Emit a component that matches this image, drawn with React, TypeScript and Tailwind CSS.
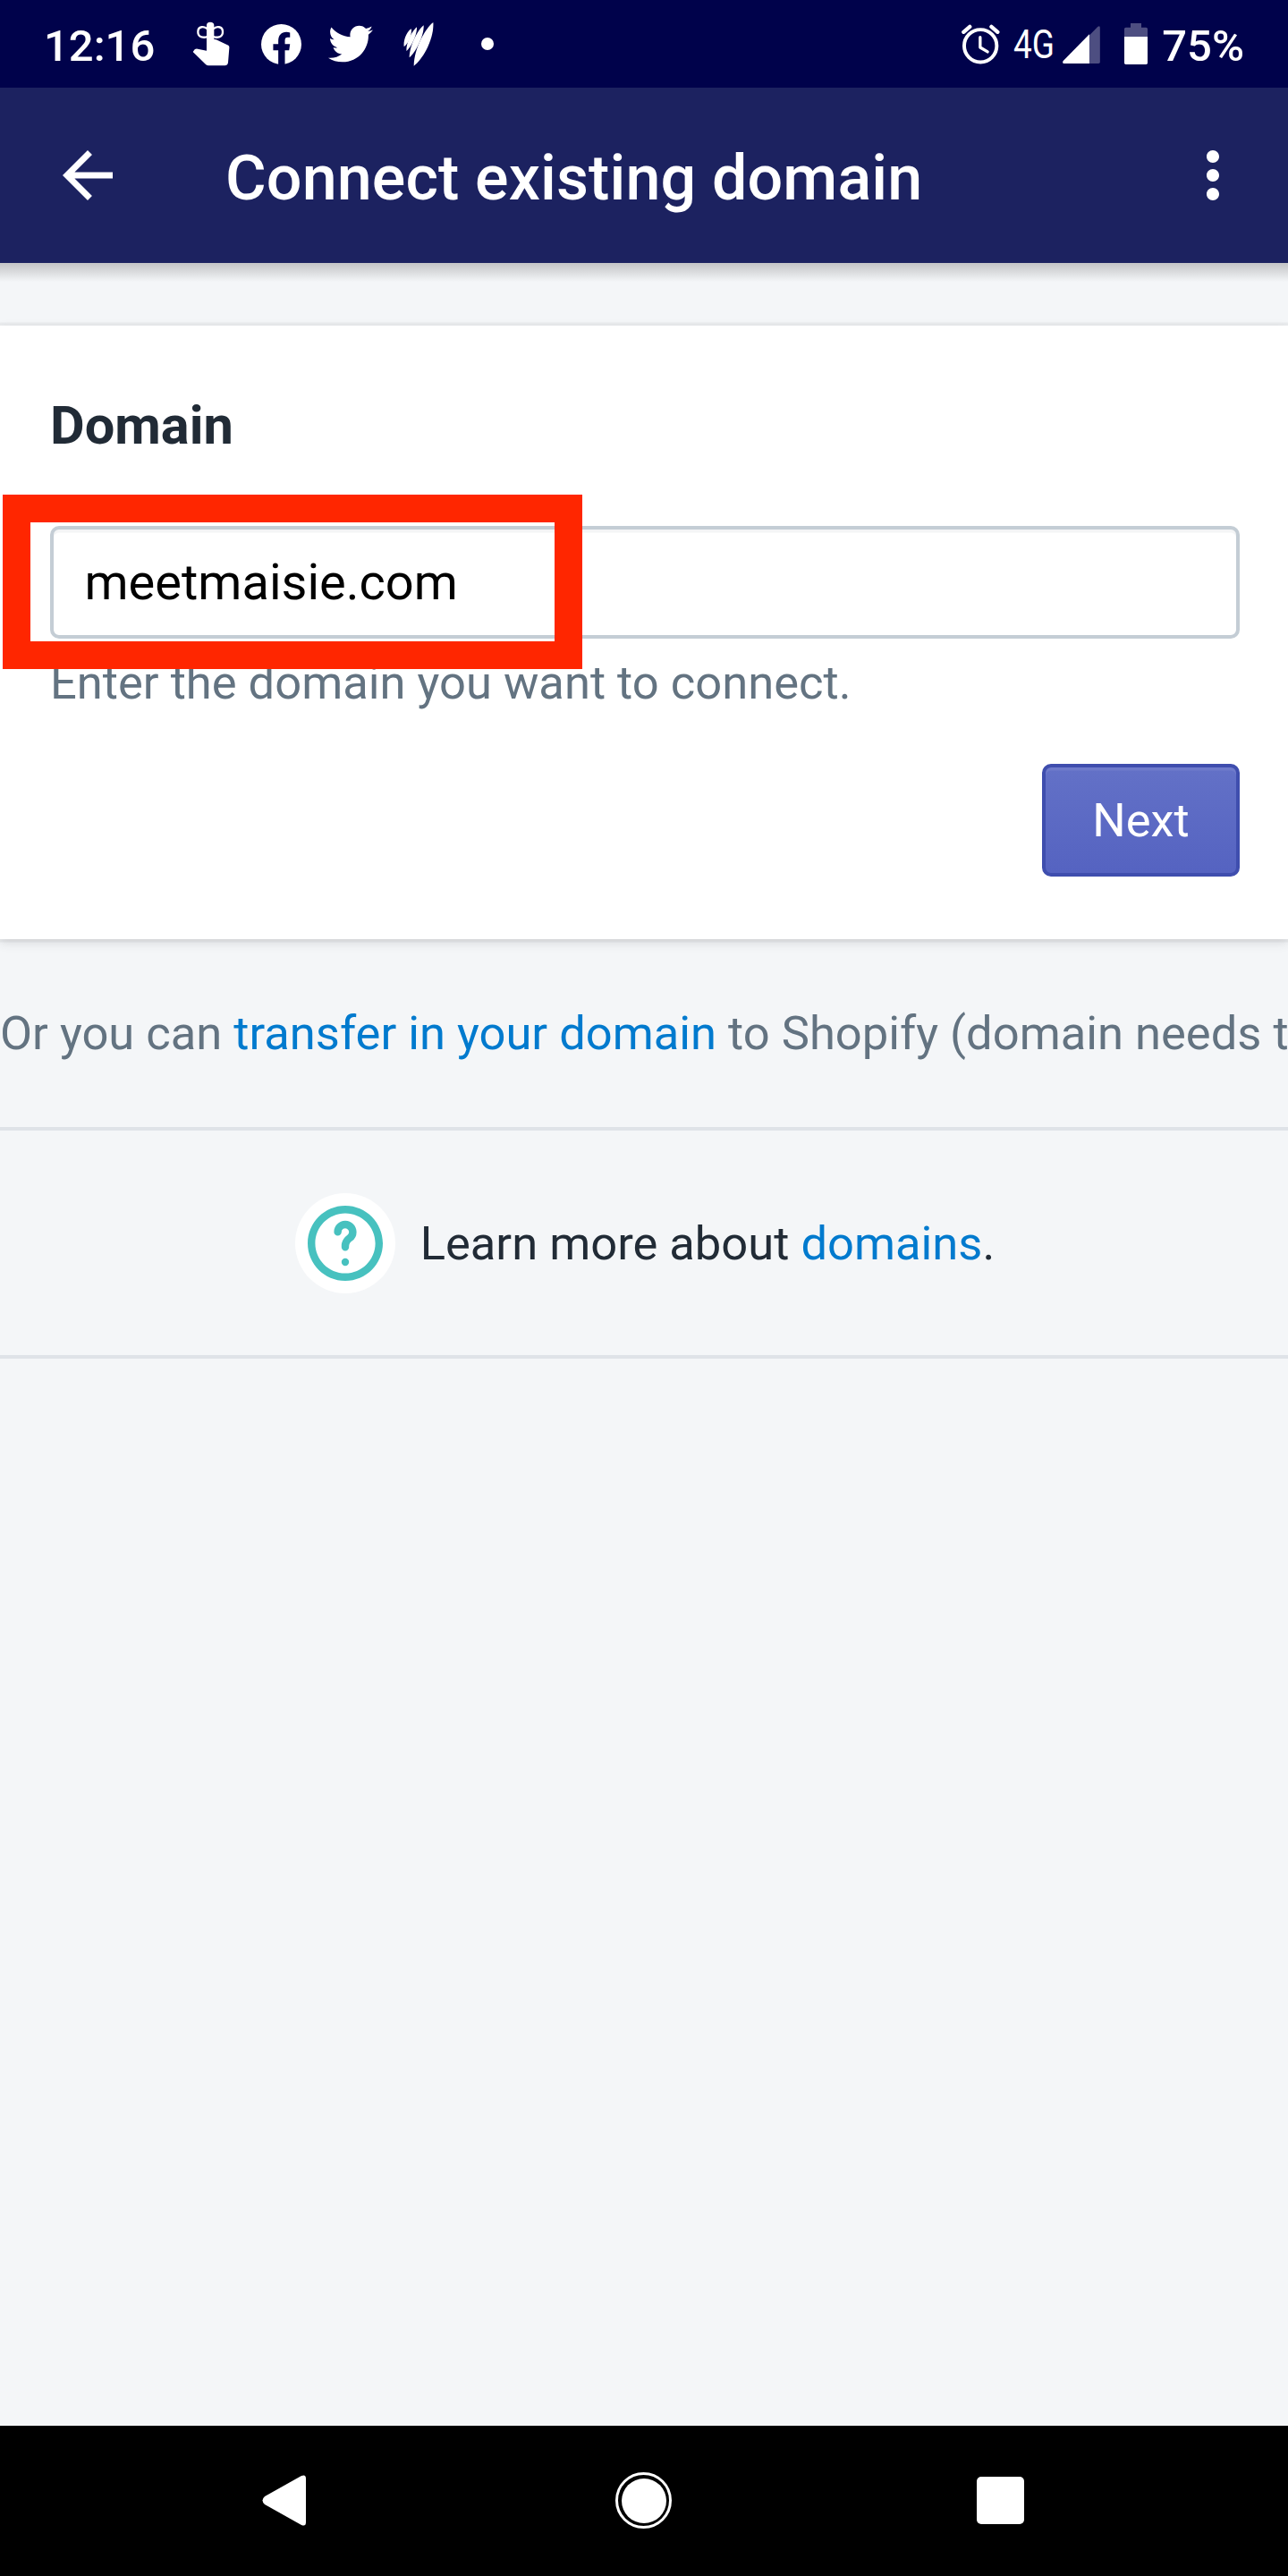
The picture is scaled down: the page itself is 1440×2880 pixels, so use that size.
import { ReactNode } from 'react';
import { FaTwitter } from 'react-icons/fa';
import { MdArrowBack, MdMoreVert } from 'react-icons/md';

function ReminderIcon() {
  return (
    <svg viewBox="645 73 126 150" className="h-[50px] w-[42px]" fill="#fff">
      <path d="M693 86Q693 75 705 75Q718 75 718 86V133L725 134L766 153Q770 156 769 162L765 211Q763 221 754 221H699Q694 221 690 217L647 175L653 167Q657 164 663 165L693 171Z" />
      <g fill="none" stroke="#fff" strokeWidth="7">
        <path d="M695 98C686 88 664 88 664 108C664 128 686 128 695 124" />
        <path d="M716 98C725 88 747 88 747 108C747 128 725 128 716 124" />
      </g>
    </svg>
  );
}

function FacebookIcon() {
  return (
    <svg viewBox="876 81 134 134" className="h-[45px] w-[45px]">
      <circle cx="943" cy="148" r="67" fill="#fff" />
      <path
        fill="#00024b"
        d="M933 217V168H916V147H933V137C933 118 943 107 960 107Q966 107 972 109V125H964Q955 125 955 135V147H972L969 168H955V217Z"
      />
    </svg>
  );
}

function StripesIcon() {
  return (
    <svg viewBox="273 72 102 147" className="h-[49px] w-[34px]" fill="#fff">
      <path d="M300 94C286 101 272 130 275 153C287 146 301 118 300 94Z" />
      <path d="M318 88C304 98 282 138 283 168C297 158 319 116 318 88Z" />
      <path d="M341 82C323 94 293 150 293 190C312 176 343 118 341 82Z" />
      <path d="M373 72C348 90 308 160 308 218C335 200 377 130 373 72Z" />
    </svg>
  );
}

function AlarmIcon() {
  return (
    <svg
      viewBox="104 80 130 135"
      className="h-[45px] w-[43px]"
      fill="none"
      stroke="#fff"
      strokeLinecap="round"
      strokeLinejoin="round"
    >
      <circle cx="168" cy="153" r="55" strokeWidth="12" />
      <path d="M167 124V158L192 173" strokeWidth="10" />
      <path d="M111 106L132 88M205 88L226 106" strokeWidth="13" />
    </svg>
  );
}

function SignalIcon() {
  return (
    <svg viewBox="444 86 126 127" className="h-[42px] w-[42px]">
      <path fill="#4d4e81" d="M534 118L562 89Q570 84 570 92V208Q570 213 565 213H534Z" />
      <path fill="#fff" d="M534 114V213H448Q442 212 445 205Z" />
    </svg>
  );
}

function BatteryIcon() {
  return (
    <svg viewBox="651 78 78 138" className="h-[46px] w-[26px]">
      <path fill="#4d4e81" d="M672 78H708V92H724Q729 92 729 97V123H651V97Q651 92 656 92H672Z" />
      <path fill="#fff" d="M651 123H729V211Q729 216 724 216H656Q651 216 651 211Z" />
    </svg>
  );
}

function StatusBar() {
  return (
    <div className="flex h-[98px] items-center bg-[#00024b] pl-[49px] pr-[49px] text-[49px] font-medium text-white">
      <span className="w-[166px] pt-[5px]">12:16</span>
      <ReminderIcon />
      <div className="ml-[35px]">
        <FacebookIcon />
      </div>
      <FaTwitter className="ml-[30px]" size={50} />
      <div className="ml-[34px]">
        <StripesIcon />
      </div>
      <div className="ml-[53px] h-3.5 w-3.5 rounded-full bg-white" />
      <div className="ml-auto flex items-center">
        <AlarmIcon />
        <span className="ml-[15px] w-[46px] origin-left scale-x-[0.84] pt-px text-[44px] font-normal">4G</span>
        <div className="ml-[9px] pt-0.5">
          <SignalIcon />
        </div>
        <div className="ml-[27px]">
          <BatteryIcon />
        </div>
        <span className="ml-4 pt-[5px]">75%</span>
      </div>
    </div>
  );
}

function AppBar() {
  return (
    <header className="flex h-[196px] items-center bg-[#1c2260] pl-14 pr-[42px] text-white">
      <MdArrowBack size={84} />
      <h1 className="ml-28 grow pt-1.5 text-[70px] font-medium leading-none tracking-[0.12px]">
        Connect existing domain
      </h1>
      <MdMoreVert size={84} />
    </header>
  );
}

function Link({ children }: { children: ReactNode }) {
  return <a className="text-[#007ace]">{children}</a>;
}

function DomainCard() {
  return (
    <section className="mt-[49px] h-[686px] bg-white px-14 pr-[54px] pt-[72px] shadow-[0_0_0_3.5px_rgba(63,63,68,0.05),0_3.5px_10.5px_0_rgba(63,63,68,0.15)]">
      <h2 className="text-[59.5px] font-bold leading-20 text-[#212b36]">Domain</h2>
      <div className="relative mt-18 flex h-[126px] items-center rounded-[10px] border-4 border-[#c4cdd5] pl-[34.5px] text-[56px] text-black shadow-[inset_0_3.5px_0_rgba(99,115,129,0.07)]">
        meetmaisie.com
        <div className="absolute -left-[57px] -top-[39px] h-[195px] w-[648px] border-x-[31px] border-y-[31px] border-[#ff2600]" />
      </div>
      <p className="mt-[14px] text-[52.5px] leading-[70px] text-[#637381]">Enter the domain you want to connect.</p>
      <div className="mt-14 flex justify-end">
        <button className="h-[126px] w-[221px] rounded-[10px] border-4 border-[#3f4eae] bg-linear-to-b from-[#6371c7] to-[#5563c1] text-[52.5px] text-white shadow-[inset_0_3.5px_0_#6f7bcb]">
          Next
        </button>
      </div>
    </section>
  );
}

function HelpFooter() {
  return (
    <div className="flex h-[259px] items-center justify-center border-y-4 border-[#dfe3e8] pl-0.5 text-[52.5px] text-[#212b36]">
      <div className="mr-7 flex h-28 w-28 items-center justify-center rounded-full bg-white">
        <svg viewBox="0 0 20 20" className="h-21 w-21" fill="#47c1bf">
          <path d="M10 0C4.486 0 0 4.486 0 10s4.486 10 10 10 10-4.486 10-10S15.514 0 10 0m0 18c-4.411 0-8-3.589-8-8s3.589-8 8-8 8 3.589 8 8-3.589 8-8 8m0-4a1 1 0 1 0 0 2 1 1 0 1 0 0-2m0-10C8.346 4 7 5.346 7 7a1 1 0 1 0 2 0 1.001 1.001 0 1 1 1.591.808C9.58 8.548 9 9.616 9 10.737V11a1 1 0 1 0 2 0v-.263c0-.653.484-1.105.773-1.317A3.013 3.013 0 0 0 13 7c0-1.654-1.346-3-3-3" />
        </svg>
      </div>
      <p className="pt-px">
        Learn more about <Link>domains</Link>.
      </p>
    </div>
  );
}

function NavBar() {
  return (
    <nav className="flex h-[168px] items-center bg-black pb-px pl-[293px]">
      <svg viewBox="0 0 49 57" className="h-[57px] w-[49px]" fill="#fff">
        <path d="M44 1Q49 -1 49 4V53Q49 58 44 56L3 33Q-2 28.500 3 24Z" />
      </svg>
      <div className="ml-[346px] flex h-[63px] w-[63px] items-center justify-center rounded-full border-[3px] border-white">
        <div className="h-[50px] w-[50px] rounded-full bg-white" />
      </div>
      <div className="ml-[341px] h-[53px] w-[53px] rounded-[5px] bg-white" />
    </nav>
  );
}

export default function App() {
  return (
    <div className="flex h-[2880px] w-[1440px] flex-col overflow-hidden bg-[#f4f6f8] font-['Roboto',sans-serif]">
      <StatusBar />
      <AppBar />
      <div className="h-[21px] bg-linear-to-b from-[#c3c4c6] to-[#f4f6f8]" />
      <main className="grow">
        <DomainCard />
        <p className="h-[210px] overflow-hidden whitespace-nowrap text-[52.5px] leading-[210px] text-[#637381]">
          Or you can <Link>transfer in your domain</Link> to Shopify (domain needs t
        </p>
        <HelpFooter />
      </main>
      <NavBar />
    </div>
  );
}
